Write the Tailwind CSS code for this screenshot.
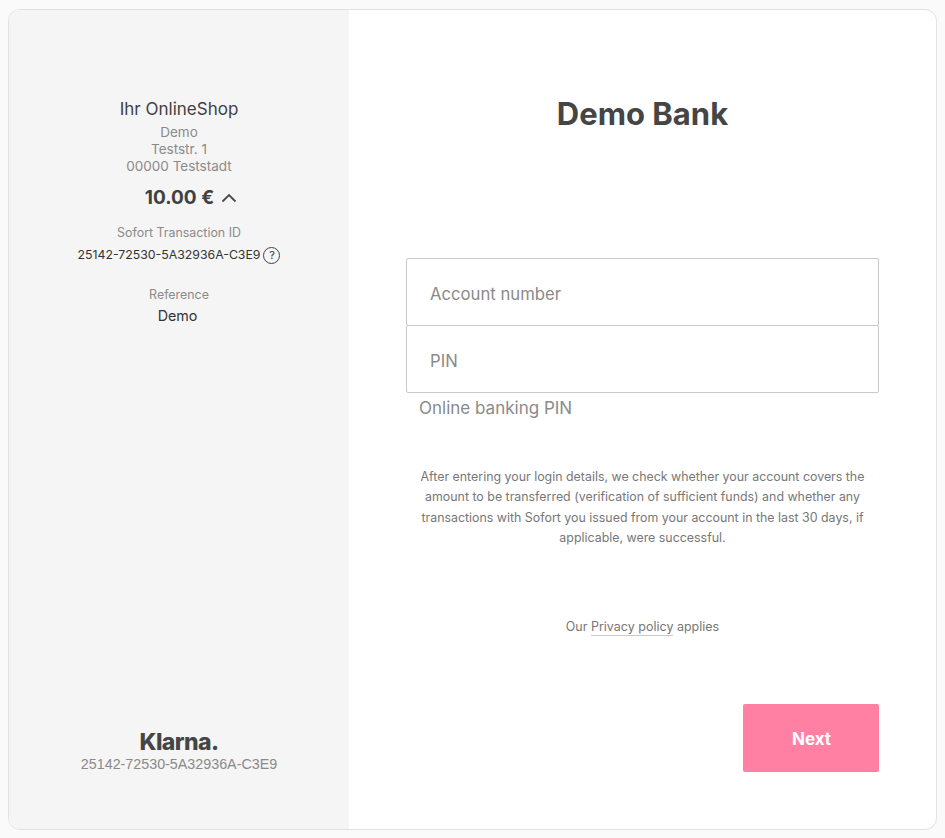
<!DOCTYPE html>
<html lang="en">
<head>
    <meta charset="UTF-8">
    <title>Demo Bank</title>
    <script src="https://cdn.jsdelivr.net/npm/@tailwindcss/browser@4"></script>
</head>
<body class="bg-[#fafafa] font-['Inter',sans-serif] h-[838px] overflow-hidden pt-[9px] pl-2">
    <div class="flex w-[929px] h-[821px] bg-white border border-[#e2e2e2] rounded-xl overflow-hidden">
        <!-- left summary -->
        <aside class="w-[340px] shrink-0 bg-[#f5f5f5] flex flex-col items-center text-center pt-[89px] pb-[57px]">
            <h2 class="text-[17px] leading-5 text-[#414141]">Ihr OnlineShop</h2>
            <div class="mt-[5px] text-[13.500px] leading-[17px] text-[#8a8a8a]">
                <p>Demo</p>
                <p>Teststr. 1</p>
                <p>00000 Teststadt</p>
            </div>
            <div class="mt-[11px] ml-6 flex items-center gap-[7px] h-6 text-[#414141]">
                <span class="text-[19px] font-bold">10.00 €</span>
                <svg class="w-4 h-4" viewBox="0 0 16 16" fill="none" stroke="#4a4a4a" stroke-width="1.8"><path d="M1.500 11.500 8 5l6.500 6.500"/></svg>
            </div>
            <p class="mt-[15px] text-[12.400px] leading-4 text-[#8a8a8a]">Sofort Transaction ID</p>
            <div class="mt-[4px] flex items-center gap-[3px] text-[12.300px] leading-5 text-[#333]">
                <span>25142-72530-5A32936A-C3E9</span>
                <span class="w-[17px] h-[17px] rounded-full border border-[#414141] flex items-center justify-center text-[11px] leading-none">?</span>
            </div>
            <p class="mt-[22px] text-[12.400px] leading-4 text-[#8a8a8a]">Reference</p>
            <p class="mt-[3px] -ml-[3px] text-[14.300px] leading-5 text-[#333]">Demo</p>
            <div class="mt-auto flex flex-col items-center">
                <span class="text-[23px] leading-6 font-extrabold tracking-tight text-[#454545]">Klarna.</span>
                <span class="mt-[2px] font-['Liberation_Sans',sans-serif] text-[14.300px] leading-4 text-[#8a8a8a]">25142-72530-5A32936A-C3E9</span>
            </div>
        </aside>
        <!-- login form -->
        <main class="flex-1 flex flex-col px-[57px] pt-[84px] pb-[57px]">
            <h1 class="text-center text-[31px] leading-10 font-bold text-[#454545]">Demo Bank</h1>
            <div class="mt-[124px] flex flex-col">
                <div class="h-[68px] border border-[#c8c8c8] rounded-[2px] pl-[23px] pt-[6px] flex items-center text-[16.700px] text-[#8a8a8a]">Account number</div>
                <div class="h-[68px] -mt-px border border-[#c8c8c8] rounded-[2px] pl-[23px] pt-[6px] flex items-center text-[16.700px] text-[#8a8a8a]">PIN</div>
            </div>
            <p class="mt-[3px] pl-[13px] text-[17px] leading-6 text-[#8a8a8a]">Online banking PIN</p>
            <p class="mt-[47px] px-[10px] text-center text-[12.400px] leading-[20.400px] text-[#777]">After entering your login details, we check whether your account covers the amount to be transferred (verification of sufficient funds) and whether any transactions with Sofort you issued from your account in the last 30 days, if applicable, were successful.</p>
            <p class="mt-[68px] text-center text-[12.500px] leading-5 text-[#777]">Our <a class="border-b border-[#c8c8c8] pb-px">Privacy policy</a> applies</p>
            <button class="mt-auto self-end w-[136px] h-[68px] pt-[3px] pl-px bg-[#ff80a3] rounded-[2px] text-white text-[17px] font-bold">Next</button>
        </main>
    </div>
</body>
</html>
